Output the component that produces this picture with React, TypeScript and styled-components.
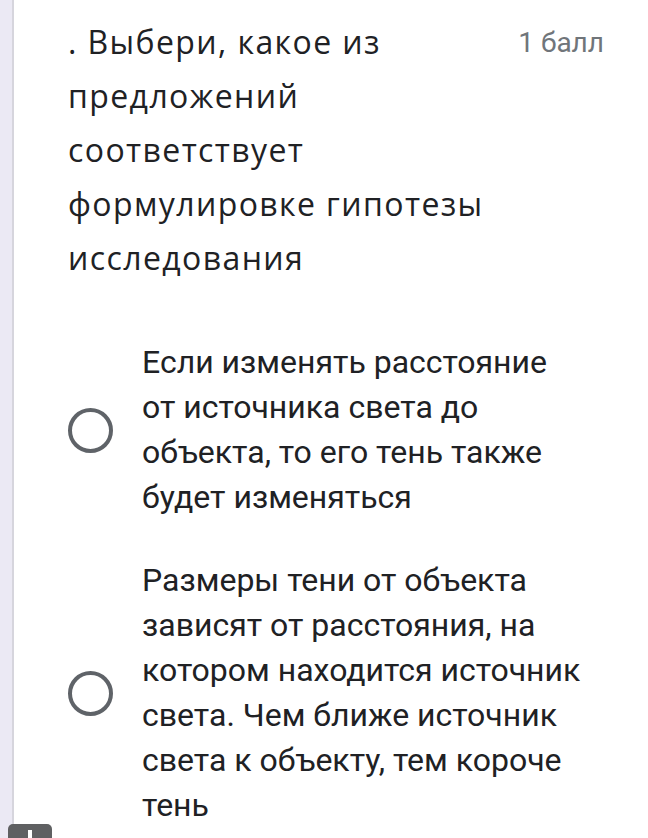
import React from "react";
import styled, { createGlobalStyle } from "styled-components";

const Global = createGlobalStyle`
  html, body { margin: 0; padding: 0; background: #ffffff; }
  body { width: 648px; height: 838px; overflow: hidden; }
`;

const Page = styled.div`
  display: flex;
  width: 648px;
  height: 838px;
  position: relative;
  overflow: hidden;
`;

const SideStrip = styled.div`
  width: 12px;
  flex: none;
  background: #ebe9f4;
  border-right: 2px solid #d6d5dd;
`;

const Card = styled.div`
  flex: 1;
  padding: 15px 44px 0 54px;
  display: flex;
  flex-direction: column;
`;

const Header = styled.div`
  display: flex;
  align-items: flex-start;
  justify-content: space-between;
`;

const Title = styled.div`
  width: 436px;
  font-family: "Open Sans", "Noto Sans", sans-serif;
  font-size: 32px;
  letter-spacing: 1.4px;
  line-height: 54px;
  color: #202124;
`;

const Score = styled.div`
  font-family: Roboto, "Noto Sans", sans-serif;
  font-size: 28px;
  line-height: 56px;
  color: #70757a;
  white-space: nowrap;
`;

const Options = styled.div`
  display: flex;
  flex-direction: column;
  gap: 38px;
  margin-top: 55px;
`;

const Option = styled.label`
  display: flex;
  align-items: center;
  gap: 29px;
`;

const Radio = styled.span`
  flex: none;
  width: 45px;
  height: 45px;
  box-sizing: border-box;
  border: 4px solid #5f6368;
  border-radius: 50%;
`;

const OptionText = styled.div`
  font-family: Roboto, "Noto Sans", sans-serif;
  font-size: 32px;
  line-height: 45px;
  color: #202124;
  width: 446px;
`;

const Fab = styled.div`
  position: absolute;
  left: 8px;
  top: 824px;
  width: 44px;
  height: 40px;
  border-radius: 5px;
  background: #5f6062;
  display: flex;
  justify-content: center;
`;

const FabBar = styled.span`
  margin-top: 6px;
  width: 4px;
  height: 20px;
  background: #ffffff;
`;

export default function App() {
  return (
    <Page>
      <Global />
      <SideStrip />
      <Card>
        <Header>
          <Title>
            . Выбери, какое из предложений соответствует формулировке гипотезы
            исследования
          </Title>
          <Score>1 балл</Score>
        </Header>
        <Options>
          <Option>
            <Radio />
            <OptionText>
              Если изменять расстояние от источника света до объекта, то его
              тень также будет изменяться
            </OptionText>
          </Option>
          <Option>
            <Radio />
            <OptionText>
              Размеры тени от объекта зависят от расстояния, на котором
              находится источник света. Чем ближе источник света к объекту, тем
              короче тень
            </OptionText>
          </Option>
        </Options>
      </Card>
      <Fab>
        <FabBar />
      </Fab>
    </Page>
  );
}
